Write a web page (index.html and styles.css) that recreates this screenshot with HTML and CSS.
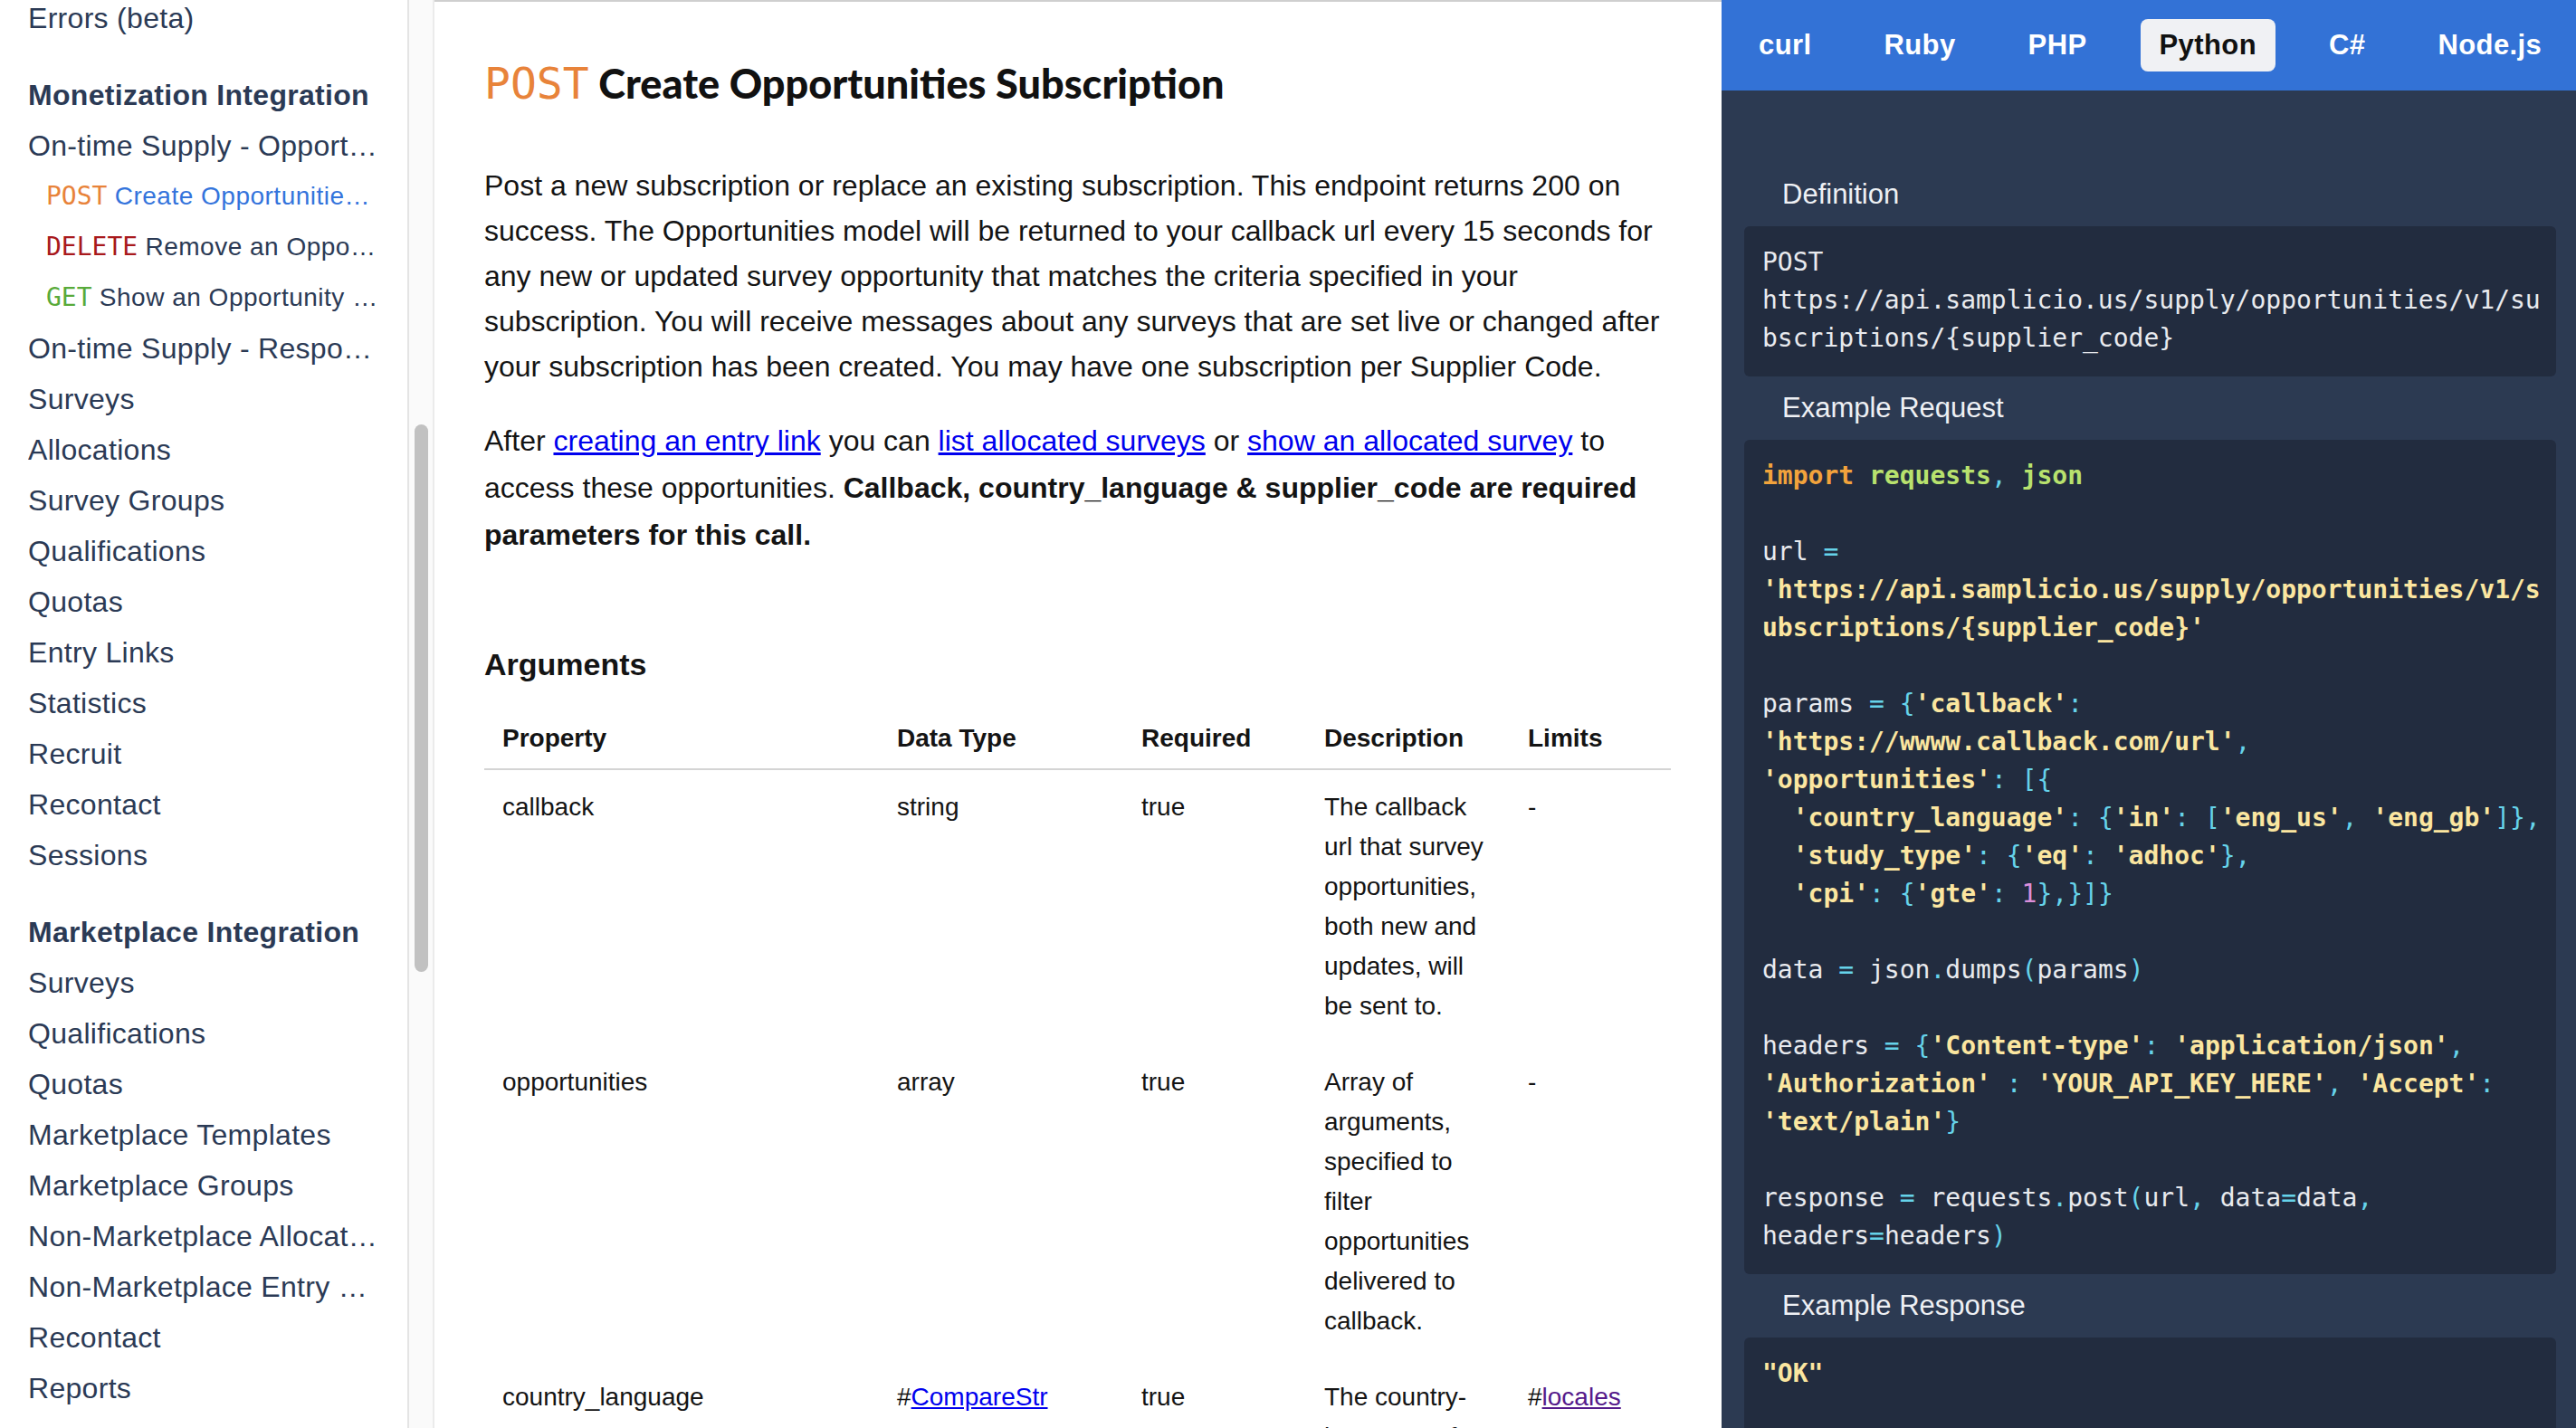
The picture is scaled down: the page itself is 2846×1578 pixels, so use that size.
FILE: index.html
```html
<!DOCTYPE html>
<html lang="en">
<head>
<meta charset="utf-8">
<title>Create Opportunities Subscription</title>
<link rel="stylesheet" href="styles.css">
</head>
<body>
<nav class="sidebar">
  <ul class="nav">
    <li class="nav-item">Errors (beta)</li>
    <li class="nav-section">Monetization Integration</li>
    <li class="nav-item">On-time Supply - Opportunities</li>
    <li class="nav-sub nav-active"><span class="method m-post">POST</span> Create Opportunities Subscription</li>
    <li class="nav-sub"><span class="method m-delete">DELETE</span> Remove an Opportunities Subscription</li>
    <li class="nav-sub"><span class="method m-get">GET</span> Show an Opportunity Subscription</li>
    <li class="nav-item">On-time Supply - Responses</li>
    <li class="nav-item">Surveys</li>
    <li class="nav-item">Allocations</li>
    <li class="nav-item">Survey Groups</li>
    <li class="nav-item">Qualifications</li>
    <li class="nav-item">Quotas</li>
    <li class="nav-item">Entry Links</li>
    <li class="nav-item">Statistics</li>
    <li class="nav-item">Recruit</li>
    <li class="nav-item">Recontact</li>
    <li class="nav-item">Sessions</li>
    <li class="nav-section">Marketplace Integration</li>
    <li class="nav-item">Surveys</li>
    <li class="nav-item">Qualifications</li>
    <li class="nav-item">Quotas</li>
    <li class="nav-item">Marketplace Templates</li>
    <li class="nav-item">Marketplace Groups</li>
    <li class="nav-item">Non-Marketplace Allocations</li>
    <li class="nav-item">Non-Marketplace Entry Links</li>
    <li class="nav-item">Recontact</li>
    <li class="nav-item">Reports</li>
  </ul>
</nav>
<div class="scrolltrack"><div class="thumb"></div></div>
<main class="main">
  <h1 class="title"><span class="title-method">POST</span> Create Opportunities Subscription</h1>
  <p class="text">Post a new subscription or replace an existing subscription. This endpoint returns 200 on success. The Opportunities model will be returned to your callback url every 15 seconds for any new or updated survey opportunity that matches the criteria specified in your subscription. You will receive messages about any surveys that are set live or changed after your subscription has been created. You may have one subscription per Supplier Code.</p>
  <p class="text text-links">After <a href="#entry-links" class="link">creating an entry link</a> you can <a href="#allocations" class="link">list allocated surveys</a> or <a href="#allocation" class="link">show an allocated survey</a> to access these opportunities. <strong>Callback, country_language &amp; supplier_code are required parameters for this call.</strong></p>
  <h2 class="section-title">Arguments</h2>
  <table class="args">
    <thead>
      <tr>
        <th class="c-prop">Property</th>
        <th class="c-type">Data Type</th>
        <th class="c-req">Required</th>
        <th class="c-desc">Description</th>
        <th class="c-lim">Limits</th>
      </tr>
    </thead>
    <tbody>
      <tr>
        <td>callback</td>
        <td>string</td>
        <td>true</td>
        <td>The callback url that survey opportunities, both new and updates, will be sent to.</td>
        <td>-</td>
      </tr>
      <tr>
        <td>opportunities</td>
        <td>array</td>
        <td>true</td>
        <td>Array of arguments, specified to filter opportunities delivered to callback.</td>
        <td>-</td>
      </tr>
      <tr>
        <td>country_language</td>
        <td>#<a href="#comparestr" class="link">CompareStr</a></td>
        <td>true</td>
        <td>The country-language of the opportunities.</td>
        <td>#<a href="#locales" class="link link-visited">locales</a></td>
      </tr>
    </tbody>
  </table>
</main>
<aside class="panel">
  <div class="tabs">
    <span class="tab">curl</span>
    <span class="tab">Ruby</span>
    <span class="tab">PHP</span>
    <span class="tab tab-active">Python</span>
    <span class="tab">C#</span>
    <span class="tab">Node.js</span>
  </div>
  <div class="panel-body">
    <div class="label">Definition</div>
    <pre class="code">POST https://api.samplicio.us/supply/opportunities/v1/subscriptions/{supplier_code}</pre>
    <div class="label">Example Request</div>
    <pre class="code"><span class="k">import</span> <span class="g">requests</span><span class="p">,</span> <span class="g">json</span>

url <span class="p">=</span> <span class="s">'https://api.samplicio.us/supply/opportunities/v1/subscriptions/{supplier_code}'</span>

params <span class="p">=</span> <span class="p">{</span><span class="s">'callback'</span><span class="p">:</span> <span class="s">'https://wwww.callback.com/url'</span><span class="p">,</span>
<span class="s">'opportunities'</span><span class="p">:</span> <span class="p">[{</span>
  <span class="s">'country_language'</span><span class="p">:</span> <span class="p">{</span><span class="s">'in'</span><span class="p">:</span> <span class="p">[</span><span class="s">'eng_us'</span><span class="p">,</span> <span class="s">'eng_gb'</span><span class="p">]},</span>
  <span class="s">'study_type'</span><span class="p">:</span> <span class="p">{</span><span class="s">'eq'</span><span class="p">:</span> <span class="s">'adhoc'</span><span class="p">},</span>
  <span class="s">'cpi'</span><span class="p">:</span> <span class="p">{</span><span class="s">'gte'</span><span class="p">:</span> <span class="n">1</span><span class="p">},}]}</span>

data <span class="p">=</span> json<span class="p">.</span>dumps<span class="p">(</span>params<span class="p">)</span>

headers <span class="p">=</span> <span class="p">{</span><span class="s">'Content-type'</span><span class="p">:</span> <span class="s">'application/json'</span><span class="p">,</span> <span class="s">'Authorization'</span> <span class="p">:</span> <span class="s">'YOUR_API_KEY_HERE'</span><span class="p">,</span> <span class="s">'Accept'</span><span class="p">:</span> <span class="s">'text/plain'</span><span class="p">}</span>

response <span class="p">=</span> requests<span class="p">.</span>post<span class="p">(</span>url<span class="p">,</span> data<span class="p">=</span>data<span class="p">,</span> headers<span class="p">=</span>headers<span class="p">)</span></pre>
    <div class="label">Example Response</div>
    <pre class="code code-last"><span class="s">"OK"</span></pre>
  </div>
</aside>
</body>
</html>
```

FILE: styles.css
```css
* {
  box-sizing: border-box;
}

html,
body {
  margin: 0;
  padding: 0;
}

body {
  width: 2846px;
  height: 1578px;
  overflow: hidden;
  display: flex;
  align-items: stretch;
  background: #ffffff;
  font-family: "Liberation Sans", Arial, sans-serif;
}

/* ---------- Sidebar ---------- */
.sidebar {
  flex: 0 0 450px;
  overflow: hidden;
  padding: 0 31px;
  color: #2b3a55;
}

.nav {
  list-style: none;
  margin: -8px 0 0;
  padding: 0;
}

.nav-item,
.nav-section,
.nav-sub {
  font-size: 32px;
  line-height: 56px;
  letter-spacing: 0.3px;
  white-space: nowrap;
  overflow: hidden;
  text-overflow: ellipsis;
}

.nav-section {
  font-weight: 700;
  margin-top: 29px;
}

.nav-sub {
  font-size: 28px;
  letter-spacing: 0.5px;
  padding-left: 20px;
}

.nav-active {
  color: #3474dc;
}

.method {
  font-family: "DejaVu Sans Mono", "Liberation Mono", monospace;
  letter-spacing: 0;
}

.m-post {
  color: #e8833a;
}

.m-delete {
  color: #a8191c;
}

.m-get {
  color: #58aa3a;
}

/* ---------- Scroll track ---------- */
.scrolltrack {
  flex: 0 0 30px;
  position: relative;
  background: #fafafa;
  border-left: 2px solid #e4e4e4;
  border-right: 2px solid #ebebeb;
}

.thumb {
  position: absolute;
  left: 6px;
  top: 469px;
  width: 15px;
  height: 605px;
  border-radius: 8px;
  background: #c1c1c1;
}

/* ---------- Main ---------- */
.main {
  flex: 0 0 1422px;
  overflow: hidden;
  border-top: 2px solid #cfcfcf;
  padding: 60px 56px 0 55px;
  color: #141414;
}

.title {
  margin: 0;
  font-family: Lato, "Liberation Sans", sans-serif;
  font-weight: 900;
  font-size: 45px;
  line-height: 60px;
  color: #111111;
}

.title-method {
  font-family: "DejaVu Sans Mono", "Liberation Mono", monospace;
  font-weight: 400;
  font-size: 48px;
  color: #e8833a;
}

.text {
  margin: 31px 0 0;
  font-size: 32px;
  line-height: 50px;
}

.title + .text {
  margin-top: 58px;
}

.text-links {
  line-height: 52px;
}

.link {
  color: #0000ee;
  text-decoration: underline;
}

.link-visited {
  color: #551a8b;
}

.section-title {
  margin: 97px 0 0;
  font-size: 34px;
  line-height: 40px;
  font-weight: 700;
}

.args {
  margin-top: 29px;
  width: 1311px;
  table-layout: fixed;
  border-collapse: collapse;
  font-size: 28px;
  line-height: 44px;
}

.args th {
  text-align: left;
  font-weight: 700;
  padding: 11px 20px;
  border-bottom: 2px solid #d4d4d4;
}

.args td {
  vertical-align: top;
  padding: 19px 20px 21px;
}

.c-prop {
  width: 436px;
}

.c-type {
  width: 270px;
}

.c-req {
  width: 202px;
}

.c-desc {
  width: 225px;
}

.c-lim {
  width: 178px;
}

/* ---------- Code panel ---------- */
.panel {
  flex: 0 0 944px;
  overflow: hidden;
  background: #2c3a52;
  color: #eef0f4;
}

.tabs {
  height: 100px;
  background: #3372d6;
  display: flex;
  align-items: center;
  gap: 38px;
  padding-left: 20px;
}

.tab {
  font-weight: 700;
  font-size: 31px;
  letter-spacing: 0.4px;
  color: #ffffff;
  height: 58px;
  line-height: 58px;
  padding: 0 21px;
  border-radius: 8px;
}

.tab-active {
  background: #f0f1f4;
  color: #111111;
}

.panel-body {
  padding-top: 80px;
}

.label {
  font-size: 31px;
  line-height: 40px;
  padding: 15px 0 15px 67px;
  color: #eef0f4;
}

.code {
  margin: 0 22px 0 25px;
  background: #222c3f;
  border-radius: 6px;
  padding: 19px 14px 21px 20px;
  font-family: "DejaVu Sans Mono", "Liberation Mono", monospace;
  font-size: 28px;
  line-height: 42px;
  white-space: pre-wrap;
  overflow-wrap: break-word;
  color: #e8eaee;
}

.code-last {
  min-height: 200px;
}

.k {
  color: #f2a33c;
  font-weight: 700;
}

.g {
  color: #b8e26e;
  font-weight: 700;
}

.p {
  color: #66d3ea;
}

.s {
  color: #fbe6a0;
  font-weight: 700;
}

.n {
  color: #dc8fdb;
}
```
